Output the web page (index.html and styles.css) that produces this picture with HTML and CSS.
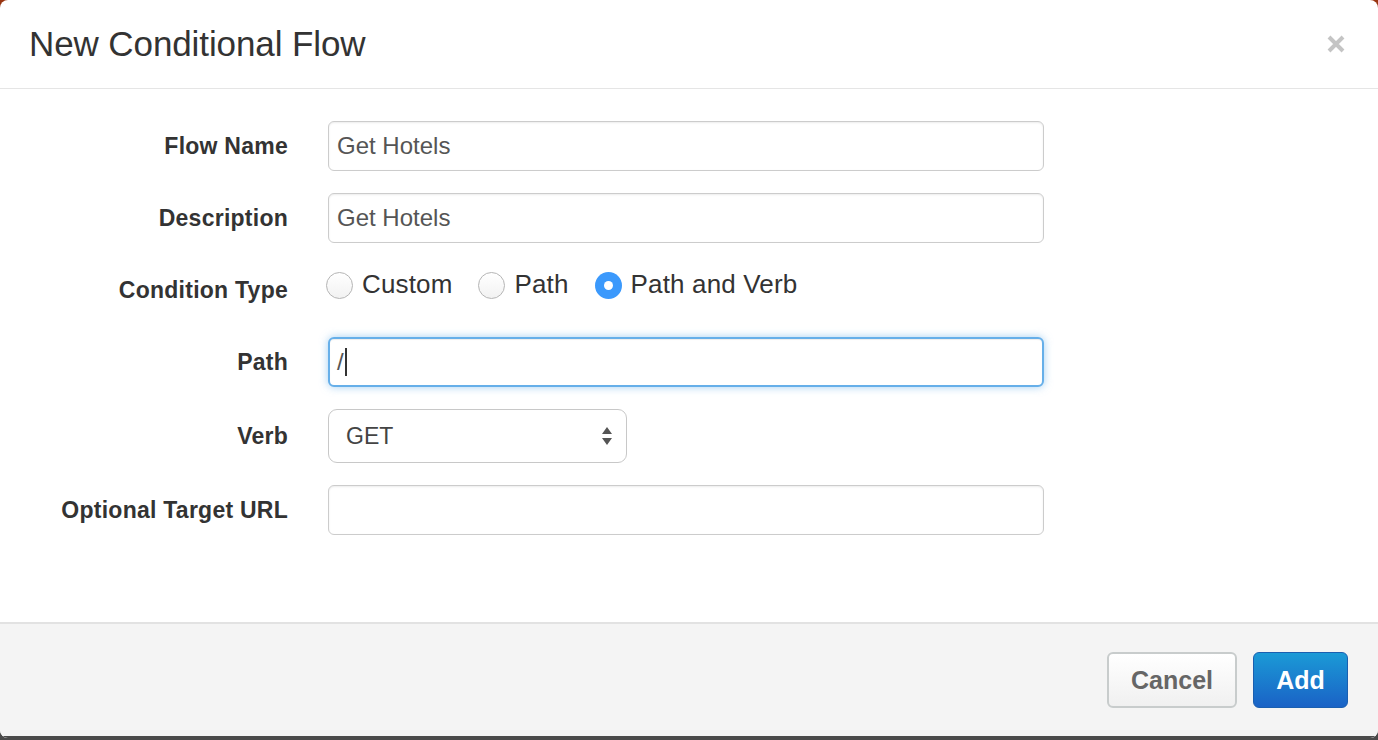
FILE: index.html
```html
<!DOCTYPE html>
<html>
<head>
<meta charset="utf-8">
<link rel="stylesheet" href="styles.css">
</head>
<body>
<div class="modal">
  <div class="modal-header">
    <h1 class="title">New Conditional Flow</h1>
    <span class="close" aria-label="Close">
      <svg width="20" height="20" viewBox="0 0 20 20"><path d="M3 3 L17 17 M17 3 L3 17" stroke="#c4c4c4" stroke-width="4" stroke-linecap="butt"/></svg>
    </span>
  </div>
  <div class="modal-body">
    <div class="form">
      <label class="lbl">Flow Name</label>
      <div class="field"><div class="input">Get Hotels</div></div>

      <label class="lbl">Description</label>
      <div class="field"><div class="input">Get Hotels</div></div>

      <label class="lbl">Condition Type</label>
      <div class="field radios">
        <span class="radio-item"><span class="radio"></span>Custom</span>
        <span class="radio-item"><span class="radio"></span>Path</span>
        <span class="radio-item"><span class="radio checked"></span>Path and Verb</span>
      </div>

      <label class="lbl">Path</label>
      <div class="field"><div class="input focus">/<span class="caret"></span></div></div>

      <label class="lbl">Verb</label>
      <div class="field">
        <div class="select">GET
          <svg class="arrows" width="12" height="20" viewBox="0 0 12 20"><path d="M6 1 L11 8 L1 8 Z M1 12 L11 12 L6 19 Z" fill="#555"/></svg>
        </div>
      </div>

      <label class="lbl">Optional Target URL</label>
      <div class="field"><div class="input"></div></div>
    </div>
  </div>
  <div class="modal-footer">
    <button class="btn btn-default">Cancel</button>
    <button class="btn btn-primary">Add</button>
  </div>
</div>
</body>
</html>
```

FILE: styles.css
```css
html, body {
  margin: 0;
  padding: 0;
}
body {
  width: 1378px;
  height: 740px;
  background: linear-gradient(#9a3510 0px, #5a3a30 60px, #4a4a4a 200px, #4a4a4a 100%);
  font-family: "Liberation Sans", Arial, sans-serif;
  overflow: hidden;
}
.modal {
  width: 1378px;
  height: 738px;
  background: #ffffff;
  border-radius: 8px;
  display: flex;
  flex-direction: column;
  overflow: hidden;
}
.modal-header {
  height: 88px;
  border-bottom: 1px solid #e5e5e5;
  display: flex;
  align-items: center;
  justify-content: space-between;
  padding: 0 32px 0 29px;
  box-sizing: content-box;
  flex: none;
}
.title {
  margin: 0;
  font-weight: normal;
  font-size: 35px;
  color: #333;
  letter-spacing: -0.1px;
}
.close {
  display: flex;
  width: 20px;
  height: 20px;
}
.modal-body {
  flex: 1;
  padding-top: 32px;
}
.form {
  display: grid;
  grid-template-columns: 288px 716px;
  column-gap: 40px;
  row-gap: 22px;
  align-items: center;
}
.lbl {
  text-align: right;
  font-weight: bold;
  font-size: 23px;
  color: #333;
  letter-spacing: 0.25px;
}
.field {
  display: flex;
  align-items: center;
}
.input {
  box-sizing: border-box;
  width: 716px;
  height: 50px;
  border: 1px solid #cccccc;
  border-radius: 6px;
  box-shadow: inset 0 1px 2px rgba(0,0,0,0.08);
  padding: 0 8px;
  font-size: 24px;
  color: #555;
  display: flex;
  align-items: center;
  background: #fff;
}
.input.focus {
  border: 2px solid #66afe9;
  padding-left: 7px;
  box-shadow: inset 0 1px 1px rgba(0,0,0,0.075), 0 0 8px rgba(102,175,233,0.6);
}
.caret {
  display: inline-block;
  width: 2px;
  height: 28px;
  background: #333;
  margin-left: 1px;
}
.radios {
  height: 50px;
  position: relative;
  top: -6px;
  margin-left: -2px;
}
.radio-item {
  display: flex;
  align-items: center;
  font-size: 26px;
  color: #333;
  margin-right: 26px;
  letter-spacing: 0.15px;
}
.radio {
  box-sizing: border-box;
  width: 27px;
  height: 27px;
  border-radius: 50%;
  border: 1px solid #b5b5b5;
  background: linear-gradient(#ffffff, #f2f2f2);
  margin-right: 9px;
  display: inline-block;
  position: relative;
  top: 1px;
}
.radio.checked {
  border: none;
  background: #3b99fc;
}
.radio.checked::after {
  content: "";
  position: absolute;
  left: 50%;
  top: 50%;
  width: 9px;
  height: 9px;
  margin: -4.5px 0 0 -4.5px;
  border-radius: 50%;
  background: #fff;
}
.select {
  box-sizing: border-box;
  width: 299px;
  height: 54px;
  border: 1.5px solid #c8c8c8;
  border-radius: 9px;
  padding: 0 13px 0 17px;
  font-size: 23px;
  color: #444;
  display: flex;
  align-items: center;
  justify-content: space-between;
  background: #fff;
}
.modal-footer {
  flex: none;
  height: 116px;
  border-top: 2px solid #e2e2e2;
  background: #f4f4f4;
  display: flex;
  justify-content: flex-end;
  align-items: flex-start;
  padding: 28px 30px 0 0;
  gap: 16px;
  box-sizing: border-box;
  border-bottom: 2px solid #4a4a4a;
}
.btn {
  font-family: "Liberation Sans", Arial, sans-serif;
  font-weight: bold;
  font-size: 25px;
  height: 56px;
  border-radius: 6px;
  cursor: pointer;
  padding: 0;
}
.btn-default {
  width: 130px;
  color: #666;
  border: 2px solid #c8cccc;
  background: linear-gradient(#ffffff, #f0f0f0);
}
.btn-primary {
  width: 95px;
  color: #fff;
  border: 1px solid #1a5fb0;
  background: linear-gradient(#1b9ad6, #1a62c6);
}
```
